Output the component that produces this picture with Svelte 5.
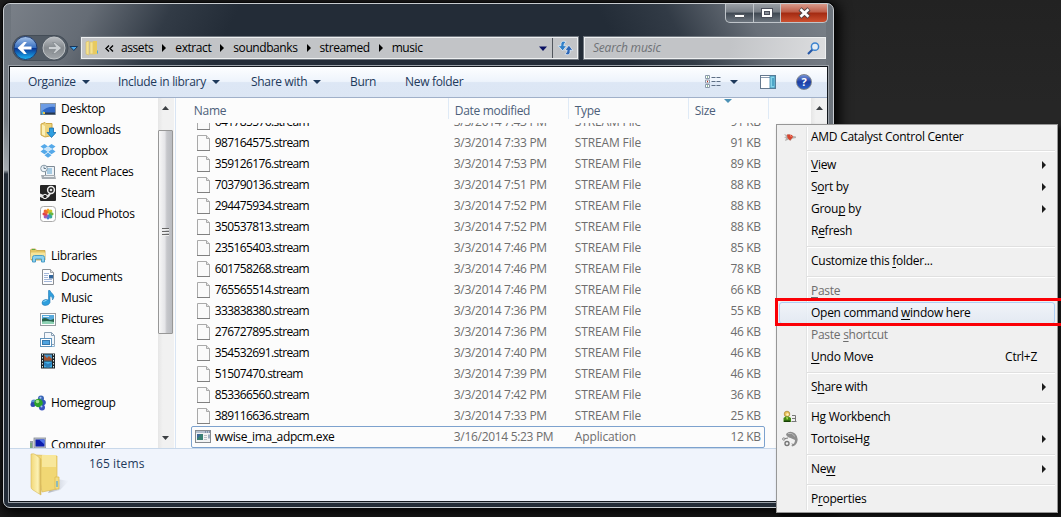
<script lang="ts">
	interface FileRow {
		name: string;
		date: string;
		size: string;
		type?: string;
		focused?: boolean;
	}

	interface MenuItem {
		label?: string;
		// character that carries the access key underline
		key?: number;
		icon?: string;
		shortcut?: string;
		submenu?: boolean;
		disabled?: boolean;
		hover?: boolean;
	}

	const crumbs = ['assets', 'extract', 'soundbanks', 'streamed', 'music'];

	const places = [
		{ label: 'Desktop', icon: 'desktop', level: 1 },
		{ label: 'Downloads', icon: 'downloads', level: 1 },
		{ label: 'Dropbox', icon: 'dropbox', level: 1 },
		{ label: 'Recent Places', icon: 'recent', level: 1 },
		{ label: 'Steam', icon: 'steam', level: 1 },
		{ label: 'iCloud Photos', icon: 'photos', level: 1 },
		null,
		{ label: 'Libraries', icon: 'libraries', level: 0 },
		{ label: 'Documents', icon: 'documents', level: 1 },
		{ label: 'Music', icon: 'music', level: 1 },
		{ label: 'Pictures', icon: 'pictures', level: 1 },
		{ label: 'Steam', icon: 'steamlib', level: 1 },
		{ label: 'Videos', icon: 'videos', level: 1 },
		null,
		{ label: 'Homegroup', icon: 'homegroup', level: 0 },
		null,
		{ label: 'Computer', icon: 'computer', level: 0 }
	];

	const files: FileRow[] = [
		{ name: '641785576.stream', date: '3/3/2014 7:43 PM', size: '91 KB' },
		{ name: '987164575.stream', date: '3/3/2014 7:33 PM', size: '91 KB' },
		{ name: '359126176.stream', date: '3/3/2014 7:53 PM', size: '89 KB' },
		{ name: '703790136.stream', date: '3/3/2014 7:51 PM', size: '88 KB' },
		{ name: '294475934.stream', date: '3/3/2014 7:52 PM', size: '88 KB' },
		{ name: '350537813.stream', date: '3/3/2014 7:52 PM', size: '88 KB' },
		{ name: '235165403.stream', date: '3/3/2014 7:46 PM', size: '85 KB' },
		{ name: '601758268.stream', date: '3/3/2014 7:46 PM', size: '78 KB' },
		{ name: '765565514.stream', date: '3/3/2014 7:46 PM', size: '66 KB' },
		{ name: '333838380.stream', date: '3/3/2014 7:36 PM', size: '55 KB' },
		{ name: '276727895.stream', date: '3/3/2014 7:36 PM', size: '46 KB' },
		{ name: '354532691.stream', date: '3/3/2014 7:40 PM', size: '46 KB' },
		{ name: '51507470.stream', date: '3/3/2014 7:39 PM', size: '46 KB' },
		{ name: '853366560.stream', date: '3/3/2014 7:42 PM', size: '36 KB' },
		{ name: '389116636.stream', date: '3/3/2014 7:33 PM', size: '25 KB' },
		{
			name: 'wwise_ima_adpcm.exe',
			date: '3/16/2014 5:23 PM',
			size: '12 KB',
			type: 'Application',
			focused: true
		}
	];

	// Items are grouped; a separator is drawn between groups
	const menu: MenuItem[][] = [
		[{ label: 'AMD Catalyst Control Center', icon: 'amd' }],
		[
			{ label: 'View', key: 0, submenu: true },
			{ label: 'Sort by', key: 1, submenu: true },
			{ label: 'Group by', key: 4, submenu: true },
			{ label: 'Refresh', key: 1 }
		],
		[{ label: 'Customize this folder...', key: 15 }],
		[
			{ label: 'Paste', key: 0, disabled: true },
			{ label: 'Open command window here', key: 13, hover: true },
			{ label: 'Paste shortcut', key: 6, disabled: true },
			{ label: 'Undo Move', key: 0, shortcut: 'Ctrl+Z' }
		],
		[{ label: 'Share with', key: 1, submenu: true }],
		[
			{ label: 'Hg Workbench', icon: 'hg' },
			{ label: 'TortoiseHg', icon: 'tortoise', submenu: true }
		],
		[{ label: 'New', key: 2, submenu: true }],
		[{ label: 'Properties', key: 1 }]
	];

	const petals = [
		['#f5a01c', 0],
		['#c9c430', 45],
		['#69b743', 90],
		['#35a89a', 135],
		['#4a7cd0', 180],
		['#a05bb8', 225],
		['#e0404c', 270],
		['#ee6a30', 315]
	];
</script>

{#snippet icon(name: string)}
	<svg class="icon" width="16" height="16" viewBox="0 0 16 16">
		{#if name === 'desktop'}
			<rect x="0.5" y="2.5" width="15" height="11" fill="#2f66c4" stroke="#8d9aa8" />
			<path d="M1 3h14v3Q7 5 1 11z" fill="#6d9ce4" />
			<path d="M1 11.500h14v2H1z" fill="#27394f" />
			<circle cx="3" cy="12" r="1.800" fill="#55b5e0" />
			<path d="M3 11h2v2H3z" fill="#e8c34c" />
		{:else if name === 'downloads'}
			<path d="M1 2l4-1.500 1 1h6v12l-7 1.500-4-2z" fill="#ecd27b" stroke="#cda849" />
			<path d="M2 2.500l3 1.500v10l-3-1.500z" fill="#fbf0b8" />
			<path d="M9.500 6h4v4.500H16L11.500 15.500 7 10.500h2.500z" fill="#2f9fe0" stroke="#186ba8" stroke-width=".8" />
		{:else if name === 'dropbox'}
			<path d="M4.500 1L8 3.500 3.800 6 .5 3.500zM11.500 1L8 3.500 12.200 6l3.300-2.500zM3.800 6L8 8.700 4.500 11.200.5 8.600zM12.200 6L8 8.700l3.500 2.500 4-2.600zM8 9.500l3.500 2.700L8 14.800l-3.500-2.600z" fill="#55a9e9" />
			<path d="M8 3.500L12.200 6 8 8.700 3.800 6z" fill="#c9e5fa" />
		{:else if name === 'recent'}
			<path d="M5.500 2.500h9v9h-9z" fill="#edf2f6" stroke="#7e8b96" />
			<path d="M7 5h5M7 7h5M7 9h5" stroke="#5ea4cf" />
			<path d="M1 11h14l1 4H2z" fill="#a5acb2" />
			<path d="M4 12.500h10" stroke="#e9edf0" />
			<circle cx="4" cy="4.500" r="3.300" fill="#eef5fa" stroke="#8799a6" />
			<path d="M4 2.500v2h2" fill="none" stroke="#4b6373" stroke-width=".8" />
		{:else if name === 'steam'}
			<rect width="16" height="16" rx="1" fill="#252525" />
			<path d="M0 8.500l6 2.500 4-3 2-1-3 5-4 2-5-2z" fill="#e8e8e8" />
			<circle cx="11" cy="5" r="3.400" fill="#252525" stroke="#eee" stroke-width="1.500" />
			<circle cx="11" cy="5" r="1.300" fill="#ddd" />
			<circle cx="5" cy="11.500" r="2.200" fill="#252525" stroke="#eee" />
		{:else if name === 'photos'}
			<rect x=".5" y=".5" width="15" height="15" rx="3" fill="#fff" stroke="#aaa" />
			{#each petals as [color, angle]}
				<ellipse cx="8" cy="4.900" rx="1.700" ry="2.500" fill={color} transform="rotate({angle} 8 8)" />
			{/each}
		{:else if name === 'libraries'}
			<path d="M.5 2l1-1h4l1 1.500h8.500V12H1z" fill="#e4c665" stroke="#c4a043" stroke-width=".8" />
			<path d="M1 4.500h14V11H1z" fill="#f6e49a" />
			<path d="M2 1.500h3" stroke="#5dab42" />
			<path d="M2.500 14V9.500q0-2 2-2h8q2 0 2 2V14h-3v-3h-6v3z" fill="#8cd1ef" stroke="#3f95c2" stroke-width=".9" />
		{:else if name === 'documents'}
			<path d="M2.500.5h8l3 3v12h-11z" fill="#fdfdfe" stroke="#8b8f94" />
			<path d="M10.500.5v3h3" fill="#ddd" stroke="#8b8f94" stroke-width=".8" />
			<path d="M4 4.500h5M4 6.500h4M4 8.500h4M4 10.500h8M4 12.500h8" stroke="#8ba5cf" stroke-width=".8" />
			<rect x="9" y="6" width="4" height="3.500" fill="#33669c" />
		{:else if name === 'music'}
			<path d="M8.500.5h1.500q.5 2 2.500 3.200Q15.500 6.500 12.500 10q.5-3.500-2.500-4v6.500q-1 3-5 3-3-.3-3-2.500 0-3 3.500-3.500 2 0 3 .6z" fill="#2f9fdd" stroke="#2279b5" stroke-width=".6" />
			<path d="M3.500 12q.5-1.500 3-1.500" stroke="#9bdcf8" fill="none" />
		{:else if name === 'pictures'}
			<rect x=".5" y="2.500" width="15" height="12" fill="#fff" stroke="#969ba0" />
			<rect x="2" y="4" width="12" height="9" fill="#57a9db" />
			<path d="M2 8q3-2 6 0t6-.5V13H2z" fill="#28634c" />
			<path d="M2 10.500q6-1 12 .5v2H2z" fill="#8fd3b5" />
			<path d="M3 5.500h6" stroke="#e4f4fc" />
		{:else if name === 'steamlib'}
			<path d="M4.500.5h7l3 3v9h-10z" fill="#f3f7fb" stroke="#8aa0b4" />
			<path d="M11.500.5v3h3" fill="none" stroke="#8aa0b4" />
			<rect x=".5" y="6.500" width="11" height="8" fill="#fff" stroke="#5d92bd" />
			<rect x="2.500" y="8.500" width="7" height="4" fill="#4fa3df" stroke="#3578ad" />
			<path d="M12 14.500h2.500V13" stroke="#8fb6d5" fill="none" />
		{:else if name === 'videos'}
			<rect x="1" y=".5" width="14" height="15" fill="#1d2429" />
			<rect x="4" y="1.500" width="8" height="6" fill="#4c94c5" />
			<rect x="4" y="8.500" width="8" height="6" fill="#44b1e7" />
			<path d="M4 2l3 3 2-2 3 3v1.500H4z" fill="#a4522e" />
			<path d="M4 9l4 2 4-2v2l-3 3.500H7L4 12z" fill="#2c7fba" />
			<path d="M2.500 1v15M13.500 1v15" stroke="#d7e6e4" stroke-dasharray="1.500 1.500" />
		{:else if name === 'homegroup'}
			<circle cx="4" cy="7.500" r="3" fill="#5b8fd0" />
			<circle cx="11" cy="3.500" r="3" fill="#3c68b8" />
			<circle cx="13" cy="7.500" r="2.800" fill="#3153bb" />
			<circle cx="12" cy="12.500" r="3" fill="#3a52c2" />
			<circle cx="3" cy="9.500" r="2.500" fill="#2f48b0" />
			<circle cx="8.500" cy="8" r="4.300" fill="#2da12c" />
			<circle cx="7.500" cy="6.500" r="1.800" fill="#a5e08c" />
			<circle cx="11.500" cy="11.500" r="1" fill="#a9c3f4" />
			<circle cx="10.500" cy="2.800" r="1" fill="#a9c3f4" />
		{:else if name === 'computer'}
			<rect x="0" y="4" width="3" height="10" fill="#98a2a8" />
			<path d="M1 6v7" stroke="#62b255" />
			<rect x="4" y="1" width="12" height="10" fill="#bfc4ca" stroke="#868c94" stroke-width=".8" />
			<rect x="5.500" y="2.500" width="9" height="7" fill="#0c1eae" />
			<path d="M9 2.500h5.500v5z" fill="#4f75ea" />
			<path d="M6 12h8v3H6z" fill="#9aa3ab" />
		{:else if name === 'exe'}
			<rect x=".5" y="1.500" width="15" height="12" fill="#f2f3f4" stroke="#868b90" />
			<path d="M1 2h14v2H1z" fill="#b3bfce" />
			<path d="M10 3h1M12 3h1M14 3h1" stroke="#4b617c" />
			<rect x="2" y="5" width="6" height="6" fill="#398072" />
			<path d="M2 5h4l-4 5z" fill="#3c6996" />
			<path d="M9 6.500h3M9 8.500h3M9 10.500h3" stroke="#bcc1c5" />
			<path d="M14 5.500v4" stroke="#486b8b" />
		{:else if name === 'amd'}
			<path d="M2 5l3 1 2-1 2 1.500 5 1v1.500l-4 .8-1.500 2.200L7 10.500 3 12l1-3-2-.5 2-1z" fill="#b5b1ae" />
			<path d="M5 5.500h2.500L10 6l1 2-3 3.500L5.500 9z" fill="#d7442e" />
			<path d="M8 6.500l1.500 1" stroke="#ff9d86" />
		{:else if name === 'hg'}
			<circle cx="5" cy="5" r="2.800" fill="#eac35c" stroke="#997221" stroke-width=".6" />
			<circle cx="5.500" cy="5.500" r="1.200" fill="#fff2c6" />
			<path d="M1.500 13V9l2-1.500h3L9 9v4z" fill="#458b16" />
			<path d="M2 11.500h6v1.500H2z" fill="#173f05" />
			<path d="M4 8l1 3 1.500-2.500z" fill="#b7dd54" />
			<path d="M10 6.500h3.500v6H10M10 9.500h3.500M9.500 12.500h5" stroke="#777" fill="none" />
		{:else if name === 'tortoise'}
			<path d="M4 3Q8-1 13 2.500q4 4 2 9-1.500 3.500-5 4l-.5-1.500q3.500-1 3.500-5L8.500 7Q4.500 6 4 3z" fill="#8d8d8d" />
			<path d="M6 2.500q4-1.500 7 3" stroke="#bbb" fill="none" />
			<circle cx="5" cy="12.500" r="2" fill="none" stroke="#777" stroke-width="1.400" />
			<circle cx="1.800" cy="8" r="1.200" fill="none" stroke="#888" />
			<path d="M3 7.500L6 7M10 12.500l1.500 1.500" stroke="#777" />
		{/if}
	</svg>
{/snippet}

{#snippet scrollArrow(down: boolean)}
	<svg width="7" height="4" viewBox="0 0 7 4" class="scroll-arrow">
		<path d={down ? 'M0 0h7L3.500 4z' : 'M0 4h7L3.500 0z'} fill="#3c3f43" />
	</svg>
{/snippet}

<div class="desktop">
	<div class="window">
		<div class="caption">
			<span class="cap-btn">
				<svg width="27" height="19" viewBox="0 0 27 19">
					<rect x="8.500" y="10.500" width="10" height="3" rx=".5" fill="#fff" stroke="#50565e" />
				</svg>
			</span>
			<span class="cap-btn">
				<svg width="26" height="19" viewBox="0 0 26 19">
					<rect x="7.500" y="4.500" width="11" height="9" fill="#fff" stroke="#4b4f5b" />
					<rect x="10.500" y="7.500" width="5" height="3" fill="#878d96" stroke="#4b4f5b" />
				</svg>
			</span>
			<span class="cap-btn close">
				<svg width="46" height="19" viewBox="0 0 46 19">
					<path d="M19 5l9 8M28 5l-9 8" stroke="#4d4244" stroke-width="4.500" />
					<path d="M19.500 5.300l8 7.400M27.500 5.300l-8 7.400" stroke="#fff" stroke-width="2.600" />
				</svg>
			</span>
		</div>

		<div class="nav-row">
			<svg class="travel" width="68" height="26" viewBox="0 0 68 26">
				<defs>
					<linearGradient id="back" x1="0" y1="0" x2="0" y2="1">
						<stop offset="0" stop-color="#a9c5ea" />
						<stop offset=".48" stop-color="#376fc0" />
						<stop offset=".52" stop-color="#0a3795" />
						<stop offset="1" stop-color="#1cb7f6" />
					</linearGradient>
					<linearGradient id="fwd" x1="0" y1="0" x2="0" y2="1">
						<stop offset="0" stop-color="#b9bdc1" />
						<stop offset=".5" stop-color="#858a8f" />
						<stop offset="1" stop-color="#a0a5a9" />
					</linearGradient>
				</defs>
				<rect x=".5" y=".5" width="55.500" height="25" rx="12.500" fill="#515a64" stroke="#444d57" />
				<circle cx="13.500" cy="13" r="11.500" fill="url(#back)" stroke="#213c6f" />
				<path d="M5.500 13L12 7h2.800l-3.300 4.500h8v3h-8l3.300 4.500H12z" fill="#fff" />
				<circle cx="42" cy="13" r="11" fill="url(#fwd)" stroke="#c0c4c7" />
				<path d="M49.500 13L43 7.500h-2.300l3 4H36.500v3h7.200l-3 4h2.300z" fill="#ccd0d3" stroke="#777d83" stroke-width=".6" />
				<path d="M58 11.500h7.500l-3.700 4z" fill="#48a7eb" stroke="#18365b" />
			</svg>

			<div class="address">
				<svg class="addr-folder" width="14" height="16" viewBox="0 0 14 16">
					<path d="M1 2l3-1v14l-3-1zM5 2h3v12H5z" fill="#f6e390" stroke="#d7bd62" stroke-width=".6" />
					<path d="M8 1h4v9h1v4l-5 .5z" fill="#e8ca60" />
					<path d="M12.500 10.500v3" stroke="#4da6da" />
				</svg>
				<svg class="chevrons" width="9" height="7" viewBox="0 0 9 7">
					<path d="M4 .5L1 3.500l3 3M8 .5L5 3.500l3 3" fill="none" stroke="#000" stroke-width="1.400" />
				</svg>
				{#each crumbs as crumb, i}
					{#if i > 0}
						<svg class="crumb-arrow" width="4" height="8" viewBox="0 0 4 8"><path d="M0 0l4 4-4 4z" /></svg>
					{/if}
					<span class="crumb">{crumb}</span>
				{/each}
				<svg class="addr-drop" width="8" height="5" viewBox="0 0 8 5"><path d="M0 .5h8L4 5z" fill="#0b1163" /></svg>
				<div class="refresh">
					<svg width="17" height="16" viewBox="0 0 15 14">
						<path d="M6 1Q3 1 3.500 5H1l4 4.500L8.500 5H6Q6 3 8 1.500z" fill="#2f7fc8" stroke="#eef6fd" stroke-width=".6" />
						<path d="M9 13q3 0 2.500-4H14l-3.500-4.500L7 9h2q0 2-2 3.500z" fill="#2d66b6" stroke="#eef6fd" stroke-width=".6" />
					</svg>
				</div>
			</div>

			<div class="search">
				<span>Search music</span>
				<svg width="13" height="13" viewBox="0 0 13 13">
					<path d="M1 12l4.500-4.500" stroke="#2657a7" stroke-width="2.200" />
					<circle cx="8" cy="4.700" r="3.600" fill="#e5edf4" stroke="#3c83cf" stroke-width="1.500" />
				</svg>
			</div>
		</div>

		<div class="client">
			<div class="toolbar">
				<span class="tool organize">Organize<i></i></span>
				<span class="tool include">Include in library<i></i></span>
				<span class="tool share">Share with<i></i></span>
				<span class="tool burn">Burn</span>
				<span class="tool">New folder</span>
				<svg class="view-icon" width="16" height="14" viewBox="0 0 16 14">
					<path d="M.5.5h4v3h-4zM.5 5h4v3h-4zM.5 9.500h4v3h-4z" fill="#fff" stroke="#8a99ab" />
					<path d="M2 2h1M2 11h1" stroke="#297a3c" />
					<path d="M2 6.500h1" stroke="#b92c20" stroke-width="1.500" />
					<path d="M6.500 2.500h9M6.500 6.500h9M6.500 10.500h9" stroke="#5d6e85" stroke-dasharray="4 1" />
				</svg>
				<i class="view-drop"></i>
				<svg class="preview" width="16" height="14" viewBox="0 0 16 14">
					<rect x=".5" y=".5" width="15" height="13" fill="#fff" stroke="#64788e" />
					<path d="M1 2.500h9" stroke="#8a9bb0" />
					<rect x="10" y="1" width="5" height="12" fill="#83d3ea" stroke="#3a84aa" stroke-width=".8" />
					<path d="M12 3h2v8h-2z" fill="#4ea6c8" />
				</svg>
				<span class="help">?</span>
			</div>

			<div class="content">
				<div class="places">
					{#each places as place}
						<div class="place" class:child={place?.level === 1}>
							{#if place}
								{@render icon(place.icon)}
								<span>{place.label}</span>
							{/if}
						</div>
					{/each}
				</div>
				<div class="scrollbar left">
					{@render scrollArrow(false)}
					<div class="thumb"><b></b><b></b><b></b></div>
					{@render scrollArrow(true)}
				</div>

				<div class="list">
					<div class="head">
						<span class="c-name">Name</span>
						<span class="c-date">Date modified</span>
						<span class="c-type">Type</span>
						<span class="c-size">Size</span>
						<svg class="sort" width="8" height="4" viewBox="0 0 8 4"><path d="M0 0h8L4 4z" fill="#4d91b5" /></svg>
					</div>
					<div class="rows">
						{#each files as file}
							<div class="row" class:focused={file.focused}>
								{#if file.focused}
									<span class="exe-icon">{@render icon('exe')}</span>
								{:else}
									<svg class="page" width="13" height="16" viewBox="0 0 13 16">
										<path d="M.5.5h9l3 3v12H.5z" fill="#fafafa" stroke="#a9a9a9" />
										<path d="M0 15.500h13" stroke="#808080" />
										<path d="M9.500.5v3h3" fill="#e4e4e4" stroke="#a9a9a9" />
									</svg>
								{/if}
								<span class="f-name">{file.name}</span>
								<span class="f-date">{file.date}</span>
								<span class="f-type">{file.type ?? 'STREAM File'}</span>
								<span class="f-size">{file.size}</span>
							</div>
						{/each}
					</div>
				</div>
				<div class="scrollbar right">{@render scrollArrow(false)}</div>
			</div>

			<div class="details">
				<svg width="40" height="44" viewBox="0 0 40 44">
					<defs>
						<linearGradient id="flap" x1="0" x2="1">
							<stop offset="0" stop-color="#f2d879" />
							<stop offset=".7" stop-color="#fcf2b5" />
							<stop offset="1" stop-color="#d6b34e" />
						</linearGradient>
						<linearGradient id="shade" x1="0" x2="1">
							<stop offset="0" stop-color="#9a9fa8" stop-opacity=".8" />
							<stop offset="1" stop-color="#c5cad6" stop-opacity="0" />
						</linearGradient>
					</defs>
					<path d="M27 27l12 2-9 9-12 3z" fill="url(#shade)" />
					<path d="M5 3l22 1v33l-15 3z" fill="#f1d774" stroke="#dbb957" stroke-width=".7" />
					<path d="M12 3h14v12H12z" fill="#f8e79b" />
					<path d="M25 25h4v12h-4z" fill="#f3dd84" stroke="#dcb94c" stroke-width=".7" />
					<path d="M27 29v6" stroke="#4ba4df" stroke-width="1.200" />
					<path d="M1 2q3-1 5 1l5 4v36l-8-5q-2-1-2-3z" fill="url(#flap)" stroke="#d7b85b" stroke-width=".6" />
				</svg>
				<span>165 items</span>
			</div>
		</div>
	</div>

	<div class="context-menu">
		{#each menu as group, g}
			{#if g > 0}
				<div class="separator"></div>
			{/if}
			{#each group as item}
				<div class="item" class:first={g === 0} class:disabled={item.disabled} class:hover={item.hover}>
					<span class="gutter">
						{#if item.icon}{@render icon(item.icon)}{/if}
					</span>
					<span class="label">
						{#if item.key !== undefined}
							{item.label.slice(0, item.key)}<u>{item.label[item.key]}</u>{item.label.slice(item.key + 1)}
						{:else}
							{item.label}
						{/if}
					</span>
					{#if item.shortcut}<span class="shortcut">{item.shortcut}</span>{/if}
					{#if item.submenu}
						<svg class="sub" width="4" height="8" viewBox="0 0 4 8"><path d="M0 0l4 4-4 4z" fill="#1c1c1c" /></svg>
					{/if}
				</div>
			{/each}
		{/each}
	</div>
	<div class="highlight"></div>
</div>

<style>
	:global(body) {
		margin: 0;
		overflow: hidden;
	}

	.desktop {
		position: relative;
		box-sizing: border-box;
		width: 1061px;
		height: 517px;
		padding: 3px;
		overflow: hidden;
		background: linear-gradient(#222 0, #262626 20%, #262626 60%, #1b1b1b);
		font-family: 'Open Sans', 'Noto Sans', sans-serif;
		font-size: 12px;
		letter-spacing: -0.31px;
		line-height: 16px;
		color: #000;
		white-space: nowrap;
	}

	svg {
		display: block;
		flex: none;
	}

	.window {
		box-sizing: border-box;
		width: 831px;
		height: 505px;
		border: 1px solid #c8ccd0;
		border-radius: 7px;
		padding: 0 5px;
		box-shadow: 0 0 0 1px #080808, 2px 2px 13px 3px #000;
		background:
			linear-gradient(#6d747c 0, #737a82 115px, #a5abb1 166px, #232c37 170px) 0 0 / 7px 100% no-repeat,
			linear-gradient(#6d747c, #6b737b) 100% 0 / 7px 100% no-repeat,
			linear-gradient(118deg, #7b8189 0, #656c75 80px, #323b46 150px, transparent 210px) no-repeat,
			linear-gradient(242deg, #7b828a 0, #686f78 80px, #323b46 150px, transparent 210px) no-repeat,
			#232c37;
	}

	/* caption buttons */
	.caption {
		display: flex;
		justify-content: flex-end;
		height: 32px;
	}

	.cap-btn {
		box-sizing: border-box;
		height: 19px;
		border: 1px solid #c0c5ca;
		border-top: 0;
		border-left-width: 0;
		background: linear-gradient(#9a9fa5 0, #767d85 45%, #3f4852 50%, #6d757e 100%);
	}

	.cap-btn:first-child {
		border-left-width: 1px;
		border-bottom-left-radius: 5px;
	}

	.close {
		border-bottom-right-radius: 5px;
		background: linear-gradient(#d99a8b 0, #bd5b46 45%, #a32a11 50%, #cc5030 100%);
	}

	/* travel buttons, address bar, search */
	.nav-row {
		display: flex;
		align-items: center;
		height: 24px;
		margin: 0 2px 6px 3px;
	}

	.travel {
		margin-right: 1px;
	}

	.address,
	.search {
		box-sizing: border-box;
		display: flex;
		align-items: center;
		height: 22px;
		border: 1px solid #eef0f1;
		outline: 1px solid #70777f;
		background: #c2c4c7;
	}

	.address {
		width: 497px;
		padding-left: 3px;
	}

	.chevrons {
		margin: 0 7px 0 6px;
	}

	.crumb {
		letter-spacing: -0.42px;
	}

	.crumb-arrow {
		margin: 0 9px;
	}

	.addr-drop {
		margin-left: auto;
		margin-right: 5px;
	}

	.refresh {
		display: flex;
		align-items: center;
		justify-content: center;
		width: 24px;
		height: 20px;
		border-left: 1px solid #51565d;
	}

	.search {
		flex: 1;
		justify-content: space-between;
		margin-left: 6px;
		padding: 0 5px 0 8px;
		background: linear-gradient(100deg, #c2c4c7 60%, #dcdddf);
		color: #6f7276;
		font-style: italic;
	}

	.search span {
		letter-spacing: -0.2px;
	}

	.client {
		box-sizing: border-box;
		width: 819px;
		height: 436px;
		border: 1px solid #11161c;
		outline: 1px solid #9ba1a8;
		background: #fcfcfc;
	}

	.toolbar {
		box-sizing: border-box;
		display: flex;
		align-items: center;
		height: 31px;
		padding: 0 15px 0 18px;
		border-bottom: 1px solid #a0b0c9;
		background: linear-gradient(#fdfeff 0, #eef4fc 48%, #dde7f5 52%, #dce6f4 100%);
		color: #1e395b;
	}

	.tool {
		display: flex;
		align-items: center;
	}

	.tool i {
		margin-left: 6px;
	}

	.toolbar i {
		border: 4px solid transparent;
		border-top-color: #1e395b;
		border-bottom: 0;
	}

	.organize {
		width: 90px;
	}

	.include {
		width: 133px;
	}

	.share {
		width: 99px;
	}

	.burn {
		width: 55px;
	}

	.view-icon {
		margin-left: auto;
	}

	.view-drop {
		margin: 0 22px 0 9px;
	}

	.preview {
		margin-right: 20px;
	}

	.help {
		box-sizing: border-box;
		width: 16px;
		height: 16px;
		border: 1.5px solid #7f868e;
		border-radius: 50%;
		background: linear-gradient(#7391d7, #1c3da3 50%, #2b62c8);
		color: #fff;
		font-size: 11px;
		font-weight: 700;
		line-height: 13px;
		text-align: center;
	}

	.content {
		display: flex;
		height: 350px;
		overflow: hidden;
	}

	.places {
		width: 148px;
	}

	.place {
		display: flex;
		align-items: center;
		gap: 5px;
		height: 21px;
		padding-left: 20px;
	}

	.place.child {
		padding-left: 30px;
	}

	.scrollbar {
		box-sizing: border-box;
		display: flex;
		flex-direction: column;
		align-items: center;
		width: 16px;
		background: linear-gradient(90deg, #e6e6e6, #f1f1f1 30%);
		padding: 8px 0;
	}

	.left {
		margin-right: 1px;
	}

	.thumb {
		box-sizing: border-box;
		display: flex;
		flex-direction: column;
		align-items: center;
		justify-content: center;
		gap: 1px;
		width: 15px;
		height: 204px;
		margin: 20px 0 auto;
		border: 1px solid #979797;
		border-radius: 1px;
		background: linear-gradient(90deg, #f7f7f7, #e5e5e8 45%, #c6c7cb 60%, #b9bbc0);
	}

	.thumb b {
		width: 7px;
		height: 2px;
		background: linear-gradient(#676767 50%, #eee 50%);
	}

	.list {
		width: 636px;
		border-left: 1px solid #d9e5f4;
		display: flex;
		flex-direction: column;
	}

	.head {
		position: relative;
		display: flex;
		height: 25px;
		line-height: 26px;
		color: #4c607a;
	}

	.head span {
		box-sizing: border-box;
		border-right: 1px solid #dfeaf6;
		height: 21px;
	}

	.c-name {
		width: 273px;
		padding-left: 18px;
	}

	.c-date {
		width: 120px;
		padding-left: 6px;
	}

	.c-type {
		width: 120px;
		padding-left: 6px;
	}

	.c-size {
		width: 80px;
		padding-left: 6px;
	}

	/* sort direction marker sits over the column title */
	.sort {
		position: absolute;
		left: 548px;
		top: 1px;
	}

	.rows {
		flex: 1;
		overflow: hidden;
	}

	.row {
		box-sizing: border-box;
		display: flex;
		align-items: center;
		width: 574px;
		height: 21px;
		margin-left: 15px;
		padding: 0 4px 0 6px;
		color: #6d6d6d;
	}

	.row:first-child {
		margin-top: -12px;
	}

	.row.focused {
		height: 22px;
		padding: 0 3px 0 5px;
		border: 1px solid #7da2ce;
		border-radius: 2px;
	}

	.page {
		margin-right: 5px;
	}

	.exe-icon {
		margin: 0 4px 0 -2px;
	}

	.f-name {
		width: 239px;
		color: #000;
		letter-spacing: -0.63px;
	}

	.focused .f-name {
		letter-spacing: -0.36px;
	}

	.f-date {
		width: 121px;
	}

	.f-type {
		flex: 1;
		letter-spacing: -0.14px;
	}

	.details {
		display: flex;
		align-items: flex-start;
		height: 53px;
		box-sizing: border-box;
		padding: 3px 0 0 20px;
		border-top: 1px solid #c8d8ea;
		background: #f0f4fc;
		color: #1e395b;
	}

	.details span {
		margin: 4px 0 0 19px;
		letter-spacing: 0.1px;
	}

	.context-menu {
		position: absolute;
		left: 776px;
		top: 124px;
		box-sizing: border-box;
		width: 282px;
		height: 389px;
		padding: 1px 2px;
		border: 1px solid #979797;
		background:
			linear-gradient(90deg, #e2e3e3 50%, #fff 50%) 29px 2px / 2px 383px no-repeat,
			#f0f0f0;
		box-shadow: 3px 3px 4px rgba(0, 0, 0, 0.7);
		letter-spacing: -0.27px;
	}

	.item {
		box-sizing: border-box;
		display: flex;
		align-items: center;
		height: 22px;
		padding: 0 8px 0 0;
		border: 1px solid transparent;
		border-radius: 3px;
	}

	.item.first {
		height: 20px;
		padding-top: 1px;
	}

	.item.disabled {
		color: #6d6d6d;
	}

	.item.hover {
		border-color: #aecff7;
		background: linear-gradient(rgba(240, 244, 250, 0.8), rgba(224, 232, 243, 0.8));
	}

	.gutter {
		display: flex;
		box-sizing: border-box;
		width: 31px;
		padding-left: 2px;
	}

	.label {
		flex: 1;
	}

	u {
		text-underline-offset: 2px;
		text-decoration-thickness: 1px;
		text-decoration-skip-ink: none;
	}

	.shortcut {
		margin-right: 9px;
	}

	.separator {
		height: 2px;
		margin: 4px 0 2px 28px;
		background: linear-gradient(#e0e0e0 50%, #fff 50%);
	}

	/* red box around the command, runs off the right edge */
	.highlight {
		position: absolute;
		left: 775px;
		top: 298px;
		box-sizing: border-box;
		width: 290px;
		height: 28px;
		border: 3px solid #fb0006;
	}
</style>
